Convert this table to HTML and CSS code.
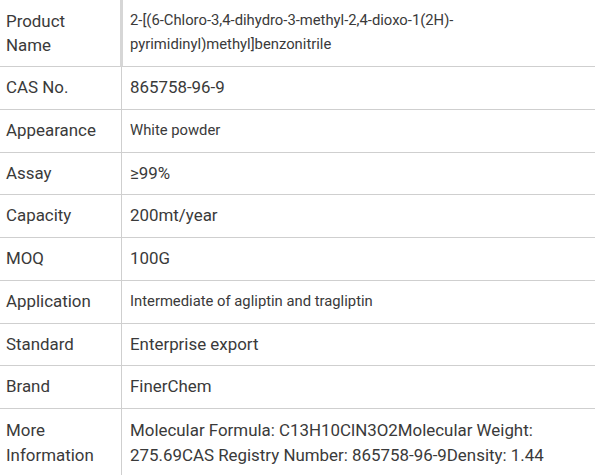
FILE: index.html
```html
<!DOCTYPE html>
<html>
<head>
<meta charset="utf-8">
<link rel="stylesheet" href="styles.css">
</head>
<body>
<div class="spec">
  <div class="label top tall">Product Name</div>
  <div class="value small first top">2-[(6-Chloro-3,4-dihydro-3-methyl-2,4-dioxo-1(2H)-pyrimidinyl)methyl]benzonitrile</div>

  <div class="label">CAS No.</div>
  <div class="value">865758-96-9</div>

  <div class="label">Appearance</div>
  <div class="value small">White powder</div>

  <div class="label">Assay</div>
  <div class="value">≥99%</div>

  <div class="label">Capacity</div>
  <div class="value">200mt/year</div>

  <div class="label">MOQ</div>
  <div class="value">100G</div>

  <div class="label">Application</div>
  <div class="value small">Intermediate of agliptin and tragliptin</div>

  <div class="label">Standard</div>
  <div class="value">Enterprise export</div>

  <div class="label">Brand</div>
  <div class="value">FinerChem</div>

  <div class="label last tall">More Information</div>
  <div class="value last tall">Molecular Formula: C13H10ClN3O2Molecular Weight: 275.69CAS Registry Number: 865758-96-9Density: 1.44</div>
</div>
</body>
</html>
```

FILE: styles.css
```css
html, body {
  margin: 0;
  padding: 0;
  background: #ffffff;
}

body {
  font-family: Roboto, "Liberation Sans", sans-serif;
  color: #3a3a3a;
}

.spec {
  display: grid;
  grid-template-columns: 121px 1fr;
  width: 595px;
}

.label,
.value {
  font-size: 16.9px;
  line-height: 23.75px;
  padding: 9px 6px;
  border-bottom: 1px solid #cfcfcf;
}

.label {
  padding-right: 12px;
}

.value {
  border-left: 1px solid #cfcfcf;
  padding-left: 8px;
}

.top {
  padding-top: 9.25px;
  padding-bottom: 9.25px;
}

.tall {
  line-height: 24.5px;
}

.label.top.tall {
  padding-top: 8.5px;
  padding-bottom: 8.5px;
}

.value.first {
  margin-left: -1px;
  border-left: 3px solid #d6d6d6;
  padding-left: 7px;
}

.small {
  font-size: 14.8px;
}

.last {
  border-bottom: none;
}
```
